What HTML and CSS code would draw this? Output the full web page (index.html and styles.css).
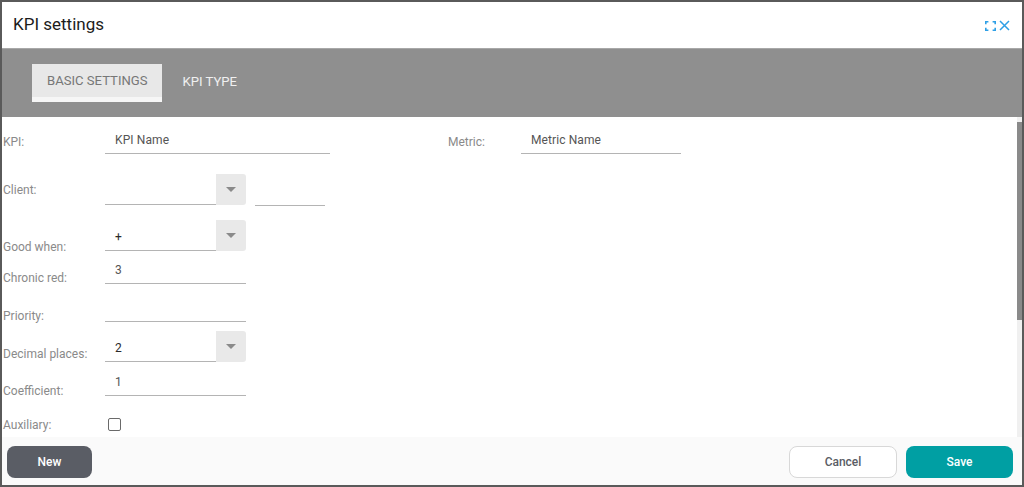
FILE: index.html
```html
<!DOCTYPE html>
<html lang="en">
<head>
    <meta charset="UTF-8">
    <title>KPI settings</title>
    <link rel="stylesheet" href="styles.css">
</head>
<body>

<div class="dialog">
    <header class="dialog-title">
        <h1>KPI settings</h1>
        <div class="title-icons">
            <svg width="11" height="10" viewBox="0 0 11 10" fill="none" stroke="#2d9fe6" stroke-width="1.6">
                <path d="M.8 3.2V.8h2.6M7.6.8h2.6v2.4M10.2 6.8v2.4H7.6M3.4 9.2H.8V6.8"/>
            </svg>
            <svg width="11" height="11" viewBox="0 0 11 11" fill="none" stroke="#2d9fe6" stroke-width="1.5">
                <path d="M1 1l9 9M10 1l-9 9"/>
            </svg>
        </div>
    </header>

    <nav class="tabs">
        <div class="tab active">BASIC SETTINGS</div>
        <div class="tab">KPI TYPE</div>
    </nav>

    <div class="form-body">
        <div class="row row-kpi">
            <label class="label">KPI:</label>
            <div class="field field-name">KPI Name</div>
            <label class="label label-metric">Metric:</label>
            <div class="field field-metric">Metric Name</div>
        </div>

        <div class="row row-client">
            <label class="label">Client:</label>
            <div class="select">
                <div class="field"></div>
                <div class="select-btn"><span class="arrow"></span></div>
            </div>
            <div class="field field-extra"></div>
        </div>

        <div class="row row-good">
            <label class="label">Good when:</label>
            <div class="select">
                <div class="field">+</div>
                <div class="select-btn"><span class="arrow"></span></div>
            </div>
        </div>

        <div class="row row-chronic">
            <label class="label">Chronic red:</label>
            <div class="field field-wide">3</div>
        </div>

        <div class="row row-priority">
            <label class="label">Priority:</label>
            <div class="field field-wide"></div>
        </div>

        <div class="row row-decimal">
            <label class="label">Decimal places:</label>
            <div class="select">
                <div class="field">2</div>
                <div class="select-btn"><span class="arrow"></span></div>
            </div>
        </div>

        <div class="row row-coef">
            <label class="label">Coefficient:</label>
            <div class="field field-wide">1</div>
        </div>

        <div class="row row-aux">
            <label class="label">Auxiliary:</label>
            <span class="checkbox"></span>
        </div>

        <div class="scroll-track"><div class="scroll-thumb"></div></div>
    </div>

    <footer class="dialog-footer">
        <button class="btn btn-new">New</button>
        <div class="footer-right">
            <button class="btn btn-cancel">Cancel</button>
            <button class="btn btn-save">Save</button>
        </div>
    </footer>
</div>

</body>
</html>
```

FILE: styles.css
```css
* {
    box-sizing: border-box;
}
body {
    font-family: Roboto, "Liberation Sans", sans-serif;
    margin: 0;
    background-color: #ffffff;
}
.dialog {
    height: 487px;
    border: 2px solid #5a5a5a;
    display: flex;
    flex-direction: column;
    overflow: hidden;
}

/* Title */
.dialog-title {
    height: 46px;
    flex: none;
    display: flex;
    align-items: center;
    justify-content: space-between;
    padding: 0 12px 2px 11px;
}
.dialog-title h1 {
    margin: 0;
    font-size: 17px;
    font-weight: 400;
    color: #1c1c1c;
}
.title-icons {
    display: flex;
    align-items: center;
    gap: 3px;
    padding-top: 3px;
}

/* Tabs */
.tabs {
    height: 69px;
    flex: none;
    background-color: #8f8f8f;
    border-top: 1px solid #a8a8a8;
    display: flex;
    padding: 15px 0 0 30px;
    gap: 5px;
}
.tab {
    height: 38px;
    padding: 0 15px 3px;
    display: flex;
    align-items: center;
    font-size: 13.1px;
    font-weight: 400;
    color: #f0f0f0;
}
.tab.active {
    background-color: #e8e8e8;
    color: #777777;
    border-bottom: 5px solid #f6f6f6;
    padding-bottom: 0;
}

/* Form */
.form-body {
    position: relative;
    flex: 1;
    min-height: 0;
    padding-left: 1px;
}
.row {
    display: flex;
    align-items: flex-end;
}
.row-kpi {
    height: 37px;
}
.row-client {
    height: 51px;
}
.row-good {
    height: 46px;
}
.row-chronic {
    height: 33px;
}
.row-priority {
    height: 38px;
}
.row-decimal {
    height: 40px;
}
.row-coef {
    height: 34px;
}
.row-aux {
    height: 36px;
    align-items: center;
}
.label {
    width: 102px;
    flex: none;
    font-size: 12px;
    line-height: 14px;
    color: #8a8a8a;
}
.row-kpi .label {
    padding-bottom: 5px;
}
.row-client .label {
    padding-bottom: 8px;
}
.row-good .label {
    margin-bottom: -3px;
}
.row-chronic .label,
.row-priority .label {
    margin-bottom: -1px;
}
.row-coef .label {
    margin-bottom: -2px;
}
.row-decimal .label {
    padding-bottom: 1px;
}
.row-aux .label {
    padding-top: 22px;
}
.row-kpi .label-metric {
    width: 73px;
    margin-left: 118px;
}
.field {
    height: 26px;
    padding: 0 0 4px 10px;
    border-bottom: 1px solid #b4b4b4;
    font-size: 12px;
    letter-spacing: 0.1px;
    line-height: 18px;
    display: flex;
    align-items: flex-end;
    color: #555555;
}
.field-name {
    width: 225px;
}
.field-metric {
    width: 160px;
}
.field-wide {
    width: 141px;
}
.field-extra {
    width: 70px;
    margin-left: 9px;
    margin-bottom: -1px;
}
.select {
    width: 141px;
    display: flex;
    align-items: flex-end;
}
.select .field {
    width: 111px;
    color: #2a2a2a;
}
.select-btn {
    width: 30px;
    height: 31px;
    background-color: #e9e9e9;
    border-radius: 0 3px 3px 0;
    display: flex;
    justify-content: center;
    padding-top: 13px;
}
.arrow {
    width: 0;
    height: 0;
    border-left: 5px solid transparent;
    border-right: 5px solid transparent;
    border-top: 5px solid #8a8a8a;
}
.checkbox {
    width: 13px;
    height: 13px;
    margin: 20px 0 0 3px;
    border: 1.5px solid #6a6a6a;
    border-radius: 2px;
    background-color: #ffffff;
}
.scroll-track {
    position: absolute;
    top: 0;
    right: 0;
    bottom: 0;
    width: 5px;
    background-color: #f0f0f0;
}
.scroll-thumb {
    height: 198px;
    margin-top: 5px;
    background-color: #8a8a8a;
}

/* Footer */
.dialog-footer {
    height: 48px;
    flex: none;
    background-color: #fafafa;
    display: flex;
    justify-content: space-between;
    padding: 9px 9px 7px 5px;
}
.footer-right {
    display: flex;
    gap: 9px;
}
.btn {
    height: 32px;
    border-radius: 8px;
    border: 1px solid transparent;
    font-family: Roboto, "Liberation Sans", sans-serif;
    font-size: 12px;
    font-weight: 500;
}
.btn-new {
    width: 85px;
    background-color: #5a5d65;
    color: #ffffff;
}
.btn-cancel {
    width: 108px;
    background-color: #ffffff;
    border-color: #d8d8d8;
    color: #5a5d65;
}
.btn-save {
    width: 107px;
    background-color: #009fa3;
    color: #ffffff;
}
```
